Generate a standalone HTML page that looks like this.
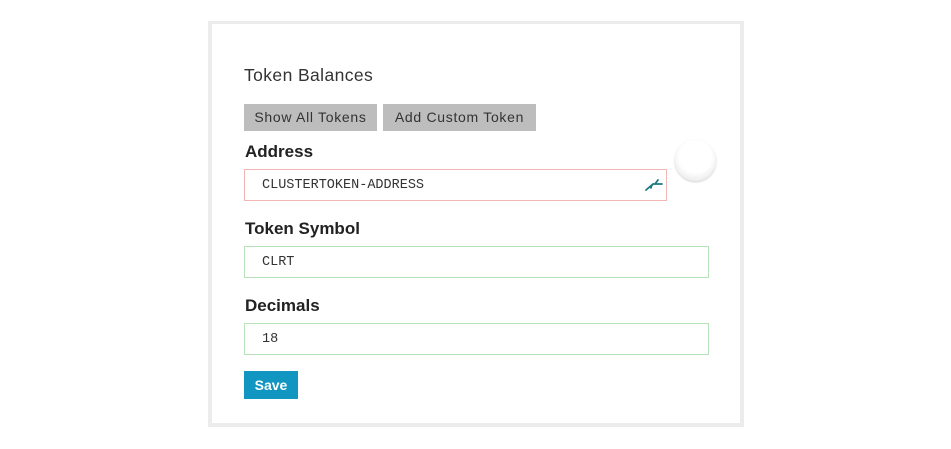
<!DOCTYPE html>
<html><head><meta charset="utf-8"><style>
*{box-sizing:border-box;margin:0;padding:0}
body{width:951px;height:449px;background:#fff;position:relative;overflow:hidden;font-family:"Liberation Sans",sans-serif;color:#333}
.card{position:absolute;left:208px;top:21px;width:536px;height:406px;border:4px solid #ececec;border-top-width:3px;background:#fff}
.abs{position:absolute}
h3{position:absolute;left:244px;top:65px;font-size:17.5px;font-weight:normal;color:#333;letter-spacing:0.4px}
.btn{position:absolute;top:104px;height:27px;background:#bdbdbd;color:#333;font-size:14px;line-height:27px;text-align:center;letter-spacing:0.7px}
.lbl{position:absolute;left:245px;font-size:17px;font-weight:bold;color:#222}
.inp{position:absolute;left:244px;height:32px;border:1px solid #b8e2b8;font-family:"Liberation Mono",monospace;font-size:13.5px;line-height:31px;padding-left:17px;color:#333}
.save{position:absolute;left:244px;top:371px;width:54px;height:28px;background:#1196c1;color:#fff;font-weight:bold;font-size:14px;line-height:28px;text-align:center}
.circ{position:absolute;left:675px;top:140px;width:41px;height:41px;border-radius:50%;background:radial-gradient(circle at 50% 40%,#fff 50%,#ececec 78%,#b5b5b5 100%);box-shadow:0 1px 2px rgba(0,0,0,.2)}
</style></head><body>
<div class="card"></div>
<h3>Token Balances</h3>
<div class="btn" style="left:244px;width:133px">Show All Tokens</div>
<div class="btn" style="left:383px;width:153px">Add Custom Token</div>
<div class="lbl" style="top:142px">Address</div>
<div class="inp" style="top:169px;width:423px;border-color:#f3b6b6">CLUSTERTOKEN-ADDRESS</div>
<svg class="abs" style="left:643px;top:177px" width="22" height="16" viewBox="0 0 22 16"><path d="M3 13 L10 7 L19 7 M12 7 L15 3 M10 7 Q8 9 8 11" stroke="#1d7a80" stroke-width="1.8" fill="none" stroke-linecap="round"/></svg>
<div class="circ"></div>
<div class="lbl" style="top:219px">Token Symbol</div>
<div class="inp" style="top:246px;width:465px">CLRT</div>
<div class="lbl" style="top:296px">Decimals</div>
<div class="inp" style="top:323px;width:465px">18</div>
<div class="save">Save</div>
</body></html>
